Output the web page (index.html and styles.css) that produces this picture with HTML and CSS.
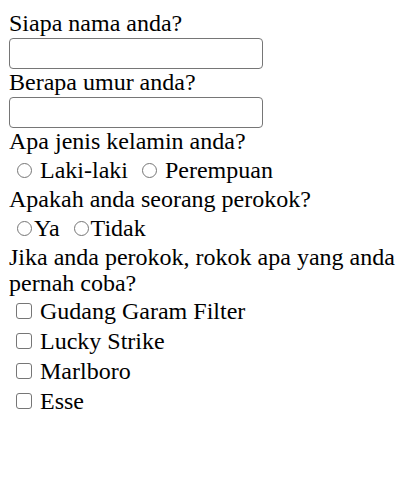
FILE: index.html
```html
<!DOCTYPE html>
<html>
<head>
<meta charset="utf-8">
<link rel="stylesheet" href="styles.css">
</head>
<body>
<form class="form">
  <label class="q" for="nama">Siapa nama anda?</label>
  <input class="text" type="text" id="nama">
  <label class="q" for="umur">Berapa umur anda?</label>
  <input class="text" type="text" id="umur">
  <div class="q">Apa jenis kelamin anda?</div>
  <div class="row radios">
    <input class="radio" type="radio" name="jk" id="l"><label for="l"> Laki-laki</label>
    <input class="radio" type="radio" name="jk" id="p"><label for="p"> Perempuan</label>
  </div>
  <div class="q">Apakah anda seorang perokok?</div>
  <div class="row radios">
    <input class="radio" type="radio" name="rk" id="ya"><label for="ya">Ya</label>
    <input class="radio" type="radio" name="rk" id="td"><label for="td">Tidak</label>
  </div>
  <div class="q q-wrap">Jika anda perokok, rokok apa yang anda pernah coba?</div>
  <div class="checklist">
    <div class="row checks"><input class="check" type="checkbox" id="c1"><label for="c1"> Gudang Garam Filter</label></div>
    <div class="row checks"><input class="check" type="checkbox" id="c2"><label for="c2"> Lucky Strike</label></div>
    <div class="row checks"><input class="check" type="checkbox" id="c3"><label for="c3"> Marlboro</label></div>
    <div class="row checks"><input class="check" type="checkbox" id="c4"><label for="c4"> Esse</label></div>
  </div>
</form>
</body>
</html>
```
FILE: styles.css
```css
body {
  margin: 10px 9px;
  font-family: "Liberation Serif", "Times New Roman", serif;
  font-size: 24px;
  color: #000;
}
.form {
  margin: 0;
}
.q {
  display: block;
  line-height: 27px;
}
.q-wrap {
  line-height: 26px;
}
.text {
  display: block;
  box-sizing: border-box;
  width: 254px;
  height: 31px;
  margin: 1px 0 0 0;
  padding: 1px 3px;
  font-family: inherit;
  font-size: 22px;
  background: #fff;
  border: 1px solid #767676;
  border-radius: 4px;
}
.radios {
  line-height: 31px;
}
.checks {
  line-height: 30px;
}
.radio,
.check {
  -webkit-appearance: none;
  appearance: none;
  box-sizing: border-box;
  background: #fff;
  border: 1px solid #767676;
  vertical-align: baseline;
}
.radio {
  width: 15px;
  height: 15px;
  margin: 0 2px 0 8px;
  border-radius: 50%;
}
.check {
  width: 16px;
  height: 16px;
  margin: 0 2px 0 7px;
  border-radius: 3px;
}
```
